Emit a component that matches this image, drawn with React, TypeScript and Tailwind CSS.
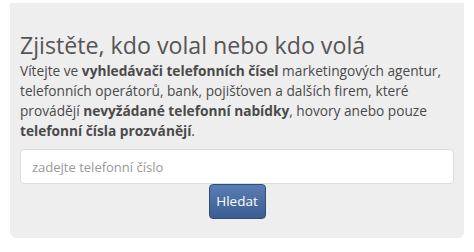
import React from "react";

export default function App() {
  return (
    <div className="h-[252px] w-[474px] bg-white font-['Open_Sans',sans-serif]">
      <div className="mx-[10px] mt-[3px] rounded-b-[6px] bg-[#eeeeee] px-[10px] pb-[19px] pt-[27px]">
        <h1 className="text-[23.2px] font-normal leading-[30px] text-[#555555]">
          Zjistěte, kdo volal nebo kdo volá
        </h1>
        <p className="mt-[1px] text-[13.7px] leading-[20px] text-[#4a4a4a]">
          Vítejte ve <b className="font-bold">vyhledávači telefonních čísel</b> marketingových agentur,
          telefonních operátorů, bank, pojišťoven a dalších firem, které provádějí{" "}
          <b className="font-bold">nevyžádané telefonní nabídky</b>, hovory anebo pouze{" "}
          <b className="font-bold">telefonní čísla prozvánějí</b>.
        </p>
        <form className="mt-[8px] flex flex-col items-center" onSubmit={(e) => e.preventDefault()}>
          <input
            type="text"
            placeholder="zadejte telefonní číslo"
            className="h-[35px] w-full rounded-[4px] border border-[#dddddd] bg-white px-[11px] text-[13px] text-[#555] outline-none placeholder:text-[#999999]"
          />
          <button
            type="submit"
            className="h-[35px] w-[57px] rounded-[4px] border border-[#2f4d7a] bg-gradient-to-b from-[#5a7db3] to-[#3b5d91] text-[13.5px] text-white"
          >
            Hledat
          </button>
        </form>
      </div>
    </div>
  );
}
